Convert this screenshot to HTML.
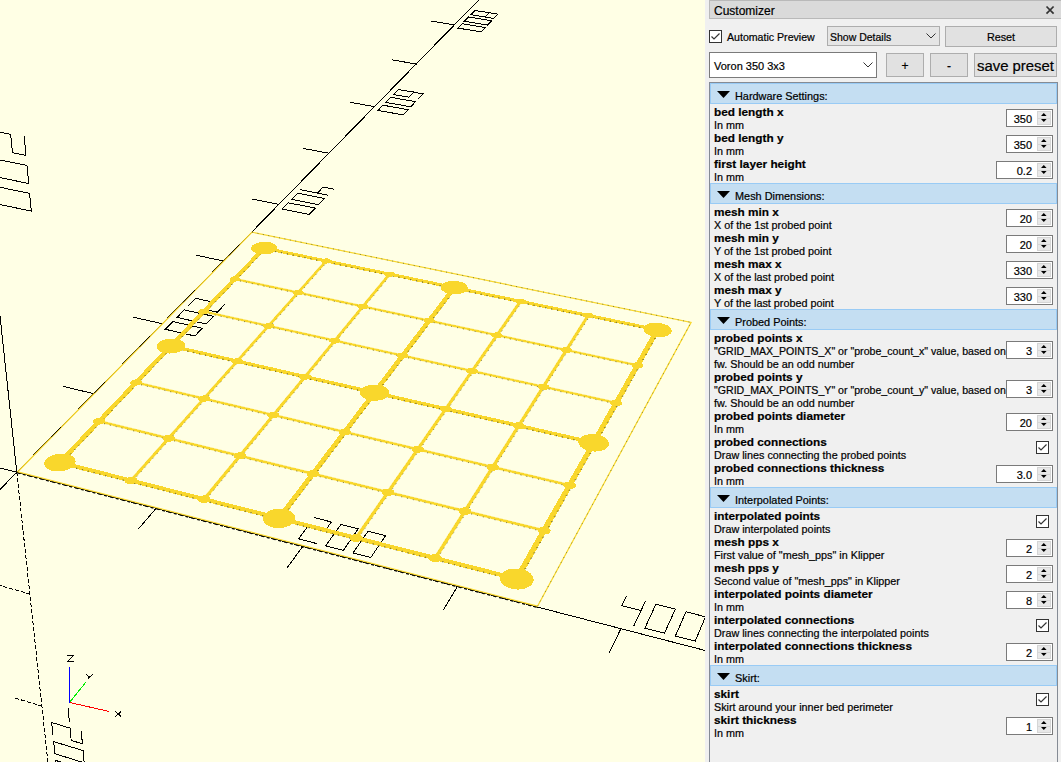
<!DOCTYPE html>
<html><head><meta charset="utf-8"><style>
html,body{margin:0;padding:0;width:1061px;height:762px;overflow:hidden;background:#f0f0f0}
.t{position:absolute;font-family:"Liberation Sans",sans-serif;color:#000;white-space:pre;-webkit-text-stroke:0.2px #000}
</style></head><body>
<div style="position:absolute;left:0;top:0;width:1061px;height:762px;overflow:hidden">
<svg width="705" height="762" viewBox="0 0 705 762" style="position:absolute;left:0;top:0;display:block">
<rect width="705" height="762" fill="#ffffe5"/>
<g stroke="#000" stroke-width="1" fill="none" stroke-linecap="square" shape-rendering="crispEdges"><line x1="16.8" y1="472.3" x2="1596.5" y2="881.2"/><line x1="16.8" y1="472.3" x2="489.6" y2="-11.1"/><line x1="16.8" y1="472.3" x2="-33.9" y2="0.7"/><line x1="16.8" y1="472.3" x2="-63.5" y2="451.5"/><line x1="16.8" y1="472.3" x2="-34.1" y2="524.2"/><line x1="16.8" y1="472.3" x2="53.0" y2="809.6" stroke-dasharray="3 3"/><line x1="156.1" y1="508.3" x2="138.6" y2="528.8"/><line x1="93.6" y1="393.7" x2="63.9" y2="386.5"/><line x1="302.8" y1="546.3" x2="287.1" y2="567.9"/><line x1="162.1" y1="323.7" x2="133.7" y2="317.3"/><line x1="457.5" y1="586.3" x2="443.8" y2="609.2"/><line x1="223.4" y1="261.0" x2="196.2" y2="255.2"/><line x1="620.9" y1="628.6" x2="609.3" y2="652.8"/><line x1="278.7" y1="204.4" x2="252.6" y2="199.2"/><line x1="793.6" y1="673.3" x2="784.5" y2="698.9"/><line x1="328.8" y1="153.2" x2="303.7" y2="148.5"/><line x1="976.5" y1="720.7" x2="970.3" y2="747.9"/><line x1="374.4" y1="106.6" x2="350.2" y2="102.3"/><line x1="1170.6" y1="770.9" x2="1167.5" y2="799.8"/><line x1="416.1" y1="64.0" x2="392.8" y2="60.0"/><line x1="1376.8" y1="824.3" x2="1377.4" y2="855.1"/><line x1="454.4" y1="24.9" x2="431.8" y2="21.2"/><line x1="29.8" y1="594.0" x2="-0.0" y2="585.6" stroke-dasharray="3 3"/><line x1="41.9" y1="706.1" x2="13.2" y2="697.5" stroke-dasharray="3 3"/><polyline points="314.2,517.6 331.4,522.0 325.6,530.0 308.4,525.6 298.6,538.9 316.1,543.4"/><polyline points="341.0,524.4 358.3,528.8 343.3,550.4 325.7,545.8 341.0,524.4"/><polyline points="368.0,531.3 385.5,535.7 370.8,557.5 353.0,552.9 368.0,531.3"/><polyline points="224.4,304.7 217.4,312.2 206.3,309.7 213.4,302.3 195.5,298.3 188.3,305.7"/><polyline points="213.4,316.3 206.2,324.0 177.0,317.4 184.3,309.9 213.4,316.3"/><polyline points="202.2,328.2 194.9,336.0 165.4,329.3 172.9,321.6 202.2,328.2"/><polyline points="626.2,596.7 621.8,605.6 641.1,610.5"/><polyline points="645.3,601.5 634.1,625.3"/><polyline points="655.9,604.2 675.3,609.1 664.5,633.2 644.9,628.1 655.9,604.2"/><polyline points="686.0,611.8 705.5,616.8 695.2,641.1 675.4,636.0 686.0,611.8"/><polyline points="333.3,189.0 323.2,187.0 317.4,193.1"/><polyline points="327.6,195.1 300.8,189.8"/><polyline points="324.4,198.5 318.5,204.7 291.6,199.3 297.6,193.2 324.4,198.5"/><polyline points="315.3,208.1 309.3,214.4 282.2,209.0 288.3,202.8 315.3,208.1"/><polyline points="995.6,690.2 974.2,684.8 967.9,711.4 989.7,717.0 993.4,700.3 971.8,694.8"/><polyline points="1007.5,693.3 1029.1,698.7 1023.8,725.8 1001.8,720.1 1007.5,693.3"/><polyline points="1041.1,701.8 1063.0,707.3 1058.2,734.6 1036.0,728.9 1041.1,701.8"/><polyline points="418.2,98.9 422.9,93.8 398.3,89.5 393.4,94.5 408.7,97.2 413.5,92.2"/><polyline points="415.5,101.7 410.7,106.8 385.8,102.4 390.7,97.3 415.5,101.7"/><polyline points="408.0,109.7 403.1,114.9 378.0,110.4 383.0,105.2 408.0,109.7"/><polyline points="1364.9,783.8 1389.1,789.9 1389.9,820.1 1365.3,813.8 1364.9,783.8"/><polyline points="1365.1,795.1 1389.4,801.3"/><polyline points="1402.4,793.3 1426.9,799.5 1428.3,830.0 1403.5,823.6 1402.4,793.3"/><polyline points="1440.4,802.9 1465.1,809.2 1467.3,840.1 1442.1,833.6 1440.4,802.9"/><polyline points="497.9,14.1 493.9,18.4 470.9,14.7 475.0,10.5 497.9,14.1"/><polyline points="489.2,12.7 485.1,17.0"/><polyline points="491.7,20.8 487.6,25.1 464.4,21.3 468.6,17.0 491.7,20.8"/><polyline points="485.3,27.5 481.2,31.9 457.9,28.1 462.1,23.7 485.3,27.5"/><polyline points="24.3,137.0 26.0,155.4 12.5,152.7 10.7,134.3 -11.5,130.0 -9.5,148.3"/><polyline points="27.0,165.4 28.7,183.5 -6.6,176.3 -8.5,158.3 27.0,165.4"/><polyline points="29.6,193.4 31.3,211.1 -3.7,203.8 -5.6,186.1 29.6,193.4"/><polyline points="68.1,708.7 69.3,721.2"/><polyline points="81.3,731.5 82.4,743.8 71.2,740.4 70.0,728.1 51.7,722.5 52.9,734.8"/><polyline points="83.1,750.6 84.2,762.8 54.9,753.7 53.7,741.6 83.1,750.6"/><polyline points="84.8,769.4 86.0,781.4 56.9,772.3 55.6,760.4 84.8,769.4"/></g>
<polygon points="17.8,471.8 537.5,606.2 691.1,322.4 252.1,232.2" fill="none" stroke="#f9d72c" stroke-width="1.2"/><polyline points="252.1,232.2 691.1,322.4 537.5,606.2" fill="none" stroke="#4a5a30" stroke-opacity="0.7" stroke-width="1" stroke-dasharray="1 4.5"/>
<g fill="#f9d72c" stroke="#f9d72c" stroke-width="1" stroke-linejoin="round" shape-rendering="crispEdges"><polygon stroke-width="0.6" points="59.1,463.2 516.2,579.9 517.2,577.9 60.7,461.6"/><polygon stroke-width="0.6" points="58.6,462.1 61.3,462.8 265.4,248.3 263.1,247.8"/><polygon stroke-width="0.6" points="98.4,422.0 543.5,531.4 544.6,529.6 99.9,420.5"/><polygon stroke-width="0.6" points="129.7,480.2 132.5,480.9 327.4,261.2 325.0,260.7"/><polygon stroke-width="0.6" points="135.4,383.2 569.2,486.1 570.1,484.4 136.8,381.8"/><polygon stroke-width="0.6" points="202.7,498.8 205.6,499.6 390.8,274.4 388.3,273.9"/><polygon stroke-width="0.6" points="170.2,346.7 593.2,443.6 594.1,442.0 171.6,345.3"/><polygon stroke-width="0.6" points="277.7,517.9 280.6,518.7 455.5,287.9 453.0,287.3"/><polygon stroke-width="0.6" points="203.1,312.2 615.8,403.6 616.6,402.1 204.4,310.9"/><polygon stroke-width="0.6" points="354.7,537.6 357.7,538.3 521.8,301.6 519.2,301.1"/><polygon stroke-width="0.6" points="234.2,279.6 637.1,366.0 637.9,364.6 235.4,278.3"/><polygon stroke-width="0.6" points="433.8,557.8 436.9,558.5 589.5,315.7 586.9,315.2"/><polygon stroke-width="0.6" points="263.7,248.7 657.1,330.5 657.9,329.2 264.8,247.5"/><polygon stroke-width="0.6" points="515.1,578.5 518.3,579.3 658.9,330.1 656.2,329.6"/><polygon points="58.7,463.7 515.9,580.4 517.5,577.4 61.1,461.2"/><polygon points="57.9,461.9 62.0,462.9 266.0,248.5 262.5,247.7"/><polygon points="169.9,347.0 593.0,444.0 594.3,441.6 171.9,345.0"/><polygon points="276.9,517.8 281.3,518.9 456.2,288.0 452.4,287.2"/><polygon points="263.4,249.0 657.0,330.9 658.1,328.9 265.1,247.2"/><polygon points="514.3,578.3 519.1,579.5 659.6,330.3 655.5,329.4"/></g>
<g fill="none" stroke="#5b5a2a" stroke-opacity="0.75" stroke-width="1" stroke-dasharray="1 5"><polyline points="58.9,463.5 516.0,580.2"/><polyline points="61.7,462.9 265.8,248.4"/><polyline points="98.2,422.2 543.4,531.7"/><polyline points="132.9,481.0 327.8,261.3"/><polyline points="135.2,383.4 569.0,486.4"/><polyline points="206.0,499.7 391.1,274.5"/><polyline points="170.0,346.9 593.1,443.8"/><polyline points="281.0,518.8 455.9,287.9"/><polyline points="203.0,312.4 615.7,403.9"/><polyline points="358.1,538.5 522.2,301.7"/><polyline points="234.1,279.7 637.0,366.2"/><polyline points="437.3,558.7 589.9,315.8"/><polyline points="263.5,248.8 657.0,330.7"/><polyline points="518.8,579.4 659.3,330.2"/><polyline points="58.5,463.9 515.7,580.6"/><polyline points="62.4,463.0 266.4,248.5"/><polyline points="169.7,347.2 592.8,444.2"/><polyline points="281.8,519.0 456.6,288.1"/><polyline points="263.2,249.1 656.8,331.1"/><polyline points="519.6,579.6 660.0,330.4"/></g>
<g fill="#f9d72c" stroke="none" shape-rendering="crispEdges"><polygon points="65.4,463.8 65.9,463.1 66.1,462.4 66.2,461.7 66.0,461.1 65.5,460.5 64.9,459.9 64.0,459.5 63.0,459.1 61.9,458.9 60.7,458.9 59.5,458.9 58.3,459.1 57.1,459.4 56.1,459.9 55.2,460.4 54.5,461.0 54.0,461.7 53.7,462.4 53.6,463.1 53.8,463.8 54.3,464.4 54.9,464.9 55.8,465.4 56.8,465.7 57.9,465.9 59.1,466.0 60.3,465.9 61.5,465.7 62.7,465.4 63.7,465.0 64.6,464.4"/><polygon points="104.5,422.5 105.0,421.9 105.2,421.3 105.2,420.6 105.0,420.0 104.6,419.4 103.9,418.9 103.1,418.5 102.1,418.2 101.0,418.0 99.9,417.9 98.7,418.0 97.5,418.1 96.4,418.4 95.4,418.9 94.5,419.4 93.9,419.9 93.4,420.6 93.1,421.2 93.1,421.9 93.3,422.5 93.8,423.1 94.4,423.6 95.2,424.0 96.2,424.3 97.3,424.5 98.5,424.6 99.7,424.5 100.8,424.4 102.0,424.0 103.0,423.6 103.8,423.1"/><polygon points="141.3,383.7 141.7,383.1 142.0,382.5 141.9,381.9 141.7,381.3 141.3,380.8 140.6,380.3 139.8,379.9 138.9,379.6 137.8,379.4 136.7,379.4 135.5,379.4 134.4,379.6 133.3,379.9 132.4,380.3 131.6,380.7 130.9,381.3 130.5,381.9 130.2,382.5 130.2,383.1 130.5,383.7 130.9,384.2 131.5,384.7 132.4,385.1 133.3,385.4 134.4,385.6 135.5,385.7 136.7,385.6 137.8,385.4 138.9,385.1 139.8,384.8 140.7,384.3"/><polygon points="176.0,347.2 176.4,346.6 176.6,346.0 176.6,345.4 176.3,344.9 175.9,344.4 175.3,343.9 174.4,343.5 173.5,343.3 172.5,343.1 171.4,343.0 170.3,343.1 169.2,343.2 168.1,343.5 167.2,343.9 166.4,344.3 165.8,344.8 165.4,345.4 165.2,346.0 165.2,346.6 165.5,347.1 165.9,347.6 166.5,348.1 167.3,348.5 168.3,348.7 169.3,348.9 170.4,349.0 171.5,348.9 172.6,348.8 173.7,348.5 174.6,348.1 175.4,347.7"/><polygon points="208.7,312.6 209.1,312.1 209.3,311.6 209.2,311.0 209.0,310.5 208.6,310.0 207.9,309.6 207.1,309.2 206.2,308.9 205.2,308.8 204.1,308.7 203.1,308.8 202.0,308.9 201.0,309.2 200.1,309.5 199.4,310.0 198.8,310.4 198.4,311.0 198.2,311.5 198.3,312.1 198.5,312.6 198.9,313.1 199.6,313.5 200.4,313.9 201.3,314.1 202.3,314.3 203.4,314.4 204.5,314.3 205.5,314.1 206.5,313.9 207.4,313.5 208.1,313.1"/><polygon points="239.7,280.0 240.0,279.5 240.2,279.0 240.1,278.4 239.9,277.9 239.5,277.5 238.8,277.1 238.1,276.7 237.2,276.5 236.2,276.3 235.1,276.3 234.1,276.3 233.0,276.5 232.1,276.7 231.2,277.1 230.5,277.5 230.0,277.9 229.6,278.4 229.4,278.9 229.5,279.4 229.7,279.9 230.2,280.4 230.8,280.8 231.6,281.2 232.5,281.4 233.5,281.6 234.5,281.6 235.6,281.6 236.6,281.4 237.6,281.2 238.4,280.9 239.1,280.4"/><polygon points="269.0,249.1 269.3,248.6 269.5,248.1 269.4,247.6 269.2,247.1 268.7,246.7 268.1,246.3 267.3,246.0 266.4,245.8 265.5,245.6 264.5,245.6 263.4,245.6 262.5,245.8 261.5,246.0 260.7,246.3 260.0,246.7 259.5,247.1 259.2,247.6 259.0,248.1 259.1,248.6 259.3,249.0 259.8,249.5 260.4,249.9 261.1,250.2 262.0,250.4 263.0,250.6 264.0,250.6 265.0,250.6 266.0,250.4 267.0,250.2 267.8,249.9 268.5,249.5"/><polygon points="136.7,482.0 137.1,481.3 137.4,480.6 137.4,479.9 137.1,479.2 136.7,478.6 136.0,478.0 135.1,477.5 134.1,477.2 132.9,477.0 131.7,476.9 130.5,477.0 129.3,477.2 128.1,477.5 127.1,478.0 126.2,478.5 125.5,479.1 125.0,479.8 124.8,480.5 124.8,481.3 125.0,481.9 125.5,482.6 126.2,483.1 127.0,483.6 128.1,484.0 129.2,484.2 130.4,484.2 131.7,484.2 132.9,484.0 134.1,483.6 135.1,483.2 136.0,482.6"/><polygon points="174.1,439.6 174.5,439.0 174.7,438.3 174.7,437.7 174.5,437.0 174.0,436.4 173.3,435.9 172.4,435.5 171.4,435.1 170.3,434.9 169.1,434.9 167.9,434.9 166.8,435.1 165.7,435.4 164.7,435.9 163.8,436.4 163.2,437.0 162.7,437.6 162.5,438.3 162.5,439.0 162.8,439.6 163.3,440.2 163.9,440.7 164.8,441.2 165.8,441.5 166.9,441.7 168.1,441.8 169.3,441.7 170.5,441.5 171.6,441.2 172.6,440.8 173.4,440.2"/><polygon points="209.2,399.8 209.7,399.2 209.8,398.6 209.8,398.0 209.6,397.4 209.1,396.8 208.4,396.3 207.6,395.9 206.6,395.6 205.5,395.4 204.3,395.3 203.2,395.4 202.0,395.6 201.0,395.9 200.0,396.3 199.2,396.8 198.6,397.3 198.2,397.9 198.0,398.6 198.0,399.2 198.3,399.8 198.8,400.4 199.4,400.9 200.3,401.3 201.3,401.6 202.4,401.8 203.5,401.8 204.7,401.8 205.8,401.6 206.9,401.3 207.8,400.9 208.6,400.4"/><polygon points="242.4,362.4 242.7,361.8 242.9,361.2 242.9,360.6 242.6,360.0 242.1,359.5 241.5,359.0 240.6,358.6 239.7,358.4 238.6,358.2 237.5,358.1 236.4,358.2 235.3,358.3 234.2,358.6 233.3,359.0 232.6,359.5 232.0,360.0 231.6,360.6 231.4,361.1 231.5,361.7 231.7,362.3 232.2,362.8 232.9,363.3 233.7,363.7 234.7,364.0 235.7,364.2 236.8,364.2 238.0,364.2 239.1,364.0 240.1,363.7 241.0,363.3 241.8,362.9"/><polygon points="273.6,327.0 274.0,326.5 274.1,325.9 274.0,325.3 273.8,324.8 273.3,324.3 272.6,323.9 271.8,323.5 270.9,323.2 269.8,323.1 268.8,323.0 267.7,323.1 266.6,323.2 265.6,323.5 264.7,323.8 264.0,324.3 263.5,324.8 263.1,325.3 262.9,325.9 263.0,326.4 263.3,327.0 263.7,327.5 264.4,327.9 265.2,328.3 266.2,328.5 267.2,328.7 268.3,328.8 269.4,328.7 270.4,328.6 271.4,328.3 272.3,327.9 273.0,327.5"/><polygon points="303.1,293.6 303.5,293.1 303.6,292.6 303.5,292.0 303.2,291.5 302.8,291.0 302.1,290.6 301.3,290.3 300.4,290.0 299.4,289.9 298.3,289.8 297.3,289.9 296.2,290.0 295.3,290.3 294.4,290.6 293.7,291.0 293.2,291.5 292.9,292.0 292.7,292.5 292.8,293.0 293.1,293.6 293.5,294.0 294.2,294.4 295.0,294.8 295.9,295.0 296.9,295.2 298.0,295.3 299.1,295.2 300.1,295.1 301.0,294.8 301.9,294.5 302.6,294.1"/><polygon points="331.0,262.0 331.4,261.5 331.5,261.0 331.4,260.5 331.1,260.0 330.6,259.6 330.0,259.2 329.2,258.8 328.3,258.6 327.3,258.4 326.3,258.4 325.3,258.4 324.3,258.6 323.3,258.8 322.5,259.1 321.9,259.5 321.3,260.0 321.0,260.4 320.9,260.9 321.0,261.5 321.3,261.9 321.7,262.4 322.4,262.8 323.2,263.1 324.1,263.4 325.1,263.5 326.1,263.6 327.1,263.5 328.1,263.4 329.1,263.1 329.9,262.8 330.5,262.4"/><polygon points="209.9,500.7 210.3,500.0 210.5,499.2 210.5,498.5 210.2,497.8 209.7,497.1 208.9,496.6 208.0,496.1 207.0,495.7 205.8,495.5 204.6,495.4 203.3,495.5 202.1,495.7 201.0,496.1 199.9,496.5 199.1,497.1 198.4,497.7 197.9,498.4 197.7,499.2 197.8,499.9 198.0,500.6 198.6,501.3 199.3,501.8 200.2,502.3 201.3,502.7 202.4,502.9 203.7,503.0 204.9,502.9 206.2,502.7 207.3,502.3 208.3,501.9 209.2,501.3"/><polygon points="245.5,457.2 245.9,456.5 246.1,455.8 246.0,455.1 245.7,454.5 245.2,453.9 244.5,453.3 243.6,452.9 242.5,452.6 241.4,452.4 240.2,452.3 239.0,452.3 237.8,452.5 236.7,452.9 235.7,453.3 234.9,453.8 234.3,454.4 233.9,455.1 233.7,455.8 233.7,456.5 234.0,457.1 234.5,457.8 235.2,458.3 236.1,458.7 237.2,459.1 238.3,459.3 239.5,459.3 240.7,459.3 241.9,459.1 243.0,458.8 244.0,458.3 244.8,457.8"/><polygon points="278.9,416.3 279.3,415.7 279.4,415.1 279.4,414.4 279.1,413.8 278.5,413.2 277.8,412.7 277.0,412.3 275.9,412.0 274.8,411.8 273.7,411.7 272.5,411.8 271.4,412.0 270.3,412.3 269.4,412.7 268.6,413.2 268.0,413.8 267.6,414.4 267.4,415.0 267.5,415.7 267.8,416.3 268.3,416.9 269.0,417.4 269.9,417.8 270.9,418.1 272.0,418.3 273.2,418.4 274.4,418.3 275.5,418.1 276.6,417.8 277.5,417.4 278.3,416.9"/><polygon points="310.3,377.9 310.7,377.3 310.8,376.7 310.8,376.1 310.5,375.5 309.9,375.0 309.2,374.5 308.4,374.1 307.4,373.8 306.3,373.7 305.2,373.6 304.0,373.6 302.9,373.8 301.9,374.1 301.0,374.5 300.3,375.0 299.7,375.5 299.4,376.1 299.2,376.7 299.3,377.3 299.6,377.9 300.1,378.4 300.8,378.9 301.7,379.3 302.6,379.6 303.7,379.8 304.9,379.8 306.0,379.8 307.1,379.6 308.1,379.3 309.0,378.9 309.8,378.5"/><polygon points="340.0,341.7 340.3,341.2 340.5,340.6 340.4,340.0 340.1,339.5 339.5,338.9 338.9,338.5 338.0,338.1 337.0,337.8 336.0,337.7 334.9,337.6 333.8,337.7 332.7,337.8 331.7,338.1 330.9,338.5 330.2,338.9 329.6,339.4 329.3,340.0 329.2,340.5 329.2,341.1 329.5,341.7 330.1,342.2 330.7,342.6 331.6,343.0 332.6,343.3 333.6,343.5 334.7,343.5 335.8,343.5 336.9,343.3 337.9,343.0 338.8,342.7 339.5,342.2"/><polygon points="368.0,307.5 368.3,307.0 368.4,306.4 368.3,305.9 368.0,305.4 367.5,304.9 366.8,304.5 366.0,304.1 365.0,303.9 364.0,303.7 362.9,303.6 361.9,303.7 360.8,303.8 359.9,304.1 359.1,304.4 358.4,304.9 357.9,305.3 357.5,305.9 357.4,306.4 357.5,306.9 357.8,307.5 358.3,308.0 359.0,308.4 359.9,308.7 360.8,309.0 361.8,309.2 362.9,309.2 364.0,309.2 365.0,309.0 366.0,308.8 366.8,308.4 367.5,308.0"/><polygon points="394.5,275.2 394.8,274.7 394.9,274.2 394.8,273.6 394.4,273.1 393.9,272.7 393.3,272.3 392.5,272.0 391.5,271.7 390.5,271.6 389.5,271.5 388.4,271.5 387.4,271.7 386.5,271.9 385.7,272.3 385.1,272.7 384.6,273.1 384.3,273.6 384.2,274.1 384.3,274.6 384.6,275.1 385.1,275.6 385.8,276.0 386.6,276.3 387.5,276.6 388.5,276.7 389.6,276.8 390.6,276.7 391.6,276.6 392.5,276.3 393.3,276.0 394.0,275.6"/><polygon points="285.0,519.8 285.4,519.1 285.6,518.3 285.5,517.6 285.2,516.9 284.6,516.2 283.9,515.6 282.9,515.1 281.8,514.8 280.6,514.5 279.4,514.5 278.1,514.5 276.9,514.7 275.7,515.1 274.7,515.6 273.9,516.2 273.2,516.8 272.8,517.5 272.7,518.3 272.7,519.1 273.0,519.8 273.6,520.5 274.4,521.0 275.3,521.5 276.4,521.9 277.6,522.1 278.9,522.2 280.1,522.1 281.4,521.9 282.5,521.6 283.5,521.1 284.4,520.5"/><polygon points="318.7,475.2 319.1,474.5 319.2,473.8 319.1,473.1 318.8,472.4 318.2,471.8 317.5,471.2 316.5,470.8 315.5,470.4 314.3,470.2 313.1,470.1 311.9,470.2 310.7,470.4 309.6,470.7 308.6,471.2 307.8,471.7 307.2,472.4 306.8,473.0 306.7,473.7 306.8,474.4 307.1,475.1 307.6,475.8 308.4,476.3 309.3,476.8 310.4,477.1 311.6,477.3 312.8,477.4 314.0,477.3 315.2,477.1 316.3,476.8 317.3,476.3 318.1,475.8"/><polygon points="350.3,433.3 350.6,432.6 350.8,432.0 350.7,431.3 350.3,430.7 349.8,430.1 349.0,429.6 348.1,429.1 347.1,428.8 345.9,428.6 344.8,428.5 343.6,428.6 342.4,428.8 341.4,429.1 340.5,429.5 339.7,430.0 339.1,430.6 338.8,431.3 338.6,431.9 338.7,432.6 339.1,433.2 339.6,433.8 340.3,434.3 341.3,434.8 342.3,435.1 343.4,435.3 344.6,435.4 345.8,435.3 347.0,435.1 348.0,434.8 349.0,434.4 349.7,433.9"/><polygon points="380.0,393.9 380.3,393.3 380.4,392.6 380.3,392.0 380.0,391.4 379.4,390.9 378.7,390.4 377.8,390.0 376.8,389.7 375.7,389.5 374.5,389.4 373.4,389.5 372.3,389.7 371.3,390.0 370.4,390.3 369.6,390.8 369.1,391.4 368.8,392.0 368.7,392.6 368.8,393.2 369.1,393.8 369.6,394.4 370.4,394.9 371.3,395.3 372.3,395.6 373.4,395.8 374.6,395.8 375.7,395.8 376.8,395.6 377.8,395.3 378.7,394.9 379.5,394.4"/><polygon points="408.0,356.8 408.3,356.2 408.4,355.6 408.3,355.0 407.9,354.5 407.4,353.9 406.6,353.5 405.8,353.1 404.8,352.8 403.7,352.6 402.6,352.6 401.5,352.6 400.4,352.8 399.4,353.1 398.6,353.4 397.9,353.9 397.3,354.4 397.0,355.0 396.9,355.6 397.1,356.2 397.4,356.7 397.9,357.3 398.7,357.7 399.5,358.1 400.5,358.4 401.6,358.6 402.7,358.6 403.9,358.6 404.9,358.4 405.9,358.1 406.8,357.7 407.5,357.3"/><polygon points="434.4,321.7 434.7,321.2 434.8,320.7 434.6,320.1 434.3,319.6 433.7,319.1 433.0,318.6 432.2,318.3 431.2,318.0 430.1,317.8 429.1,317.8 428.0,317.8 426.9,318.0 426.0,318.3 425.2,318.6 424.5,319.0 424.0,319.5 423.7,320.1 423.6,320.6 423.8,321.2 424.1,321.7 424.6,322.2 425.4,322.6 426.2,323.0 427.2,323.3 428.2,323.4 429.3,323.5 430.4,323.4 431.5,323.3 432.4,323.0 433.2,322.7 433.9,322.2"/><polygon points="459.3,288.7 459.6,288.1 459.7,287.6 459.5,287.1 459.2,286.6 458.7,286.1 458.0,285.7 457.1,285.4 456.2,285.1 455.1,285.0 454.1,284.9 453.0,285.0 452.0,285.1 451.1,285.3 450.3,285.7 449.7,286.1 449.2,286.5 448.9,287.1 448.9,287.6 449.0,288.1 449.4,288.6 449.9,289.1 450.6,289.5 451.4,289.8 452.4,290.1 453.4,290.2 454.5,290.3 455.5,290.3 456.5,290.1 457.4,289.9 458.2,289.5 458.9,289.1"/><polygon points="362.2,539.5 362.6,538.8 362.7,538.0 362.6,537.2 362.2,536.5 361.6,535.8 360.8,535.2 359.8,534.7 358.7,534.3 357.5,534.1 356.2,534.0 354.9,534.1 353.7,534.3 352.6,534.7 351.6,535.1 350.7,535.7 350.1,536.4 349.7,537.2 349.6,537.9 349.7,538.7 350.1,539.5 350.7,540.2 351.5,540.8 352.5,541.3 353.6,541.6 354.8,541.9 356.1,541.9 357.4,541.9 358.6,541.7 359.8,541.3 360.8,540.8 361.6,540.2"/><polygon points="393.8,493.6 394.2,492.9 394.3,492.2 394.2,491.5 393.8,490.8 393.2,490.1 392.4,489.6 391.4,489.1 390.3,488.8 389.1,488.6 387.9,488.5 386.7,488.5 385.5,488.7 384.4,489.1 383.4,489.5 382.7,490.1 382.1,490.7 381.7,491.4 381.6,492.2 381.7,492.9 382.1,493.6 382.7,494.2 383.5,494.8 384.5,495.3 385.6,495.6 386.8,495.8 388.0,495.9 389.2,495.9 390.4,495.6 391.5,495.3 392.5,494.8 393.3,494.3"/><polygon points="423.5,450.6 423.8,450.0 423.9,449.3 423.8,448.6 423.4,448.0 422.8,447.3 422.0,446.8 421.1,446.4 420.0,446.1 418.8,445.9 417.6,445.8 416.4,445.8 415.3,446.0 414.3,446.4 413.3,446.8 412.6,447.3 412.0,447.9 411.7,448.6 411.6,449.2 411.8,449.9 412.1,450.6 412.7,451.2 413.5,451.7 414.4,452.2 415.5,452.5 416.7,452.7 417.9,452.8 419.1,452.7 420.2,452.5 421.3,452.2 422.2,451.8 423.0,451.2"/><polygon points="451.4,410.2 451.7,409.6 451.7,409.0 451.6,408.3 451.2,407.7 450.6,407.1 449.8,406.6 448.9,406.2 447.9,405.9 446.7,405.7 445.6,405.7 444.4,405.7 443.3,405.9 442.3,406.2 441.4,406.6 440.7,407.1 440.2,407.7 439.9,408.3 439.8,408.9 440.0,409.6 440.3,410.2 440.9,410.7 441.7,411.3 442.6,411.7 443.7,412.0 444.8,412.2 446.0,412.2 447.1,412.2 448.2,412.0 449.3,411.7 450.1,411.3 450.8,410.8"/><polygon points="477.6,372.2 477.9,371.6 477.9,371.0 477.8,370.4 477.4,369.8 476.8,369.3 476.0,368.8 475.1,368.4 474.1,368.1 473.0,368.0 471.9,367.9 470.8,367.9 469.7,368.1 468.7,368.4 467.9,368.8 467.2,369.2 466.7,369.8 466.4,370.4 466.4,371.0 466.5,371.6 466.9,372.1 467.5,372.7 468.2,373.2 469.1,373.5 470.2,373.8 471.3,374.0 472.4,374.1 473.5,374.0 474.6,373.9 475.6,373.6 476.4,373.2 477.1,372.7"/><polygon points="502.3,336.3 502.6,335.8 502.6,335.2 502.5,334.6 502.1,334.1 501.5,333.6 500.8,333.1 499.9,332.8 498.9,332.5 497.8,332.3 496.7,332.3 495.6,332.3 494.6,332.5 493.6,332.7 492.8,333.1 492.2,333.5 491.7,334.0 491.4,334.6 491.4,335.2 491.5,335.7 491.9,336.3 492.5,336.8 493.2,337.2 494.1,337.6 495.1,337.9 496.2,338.0 497.3,338.1 498.4,338.1 499.4,337.9 500.4,337.6 501.2,337.3 501.9,336.8"/><polygon points="525.7,302.4 525.9,301.9 526.0,301.4 525.8,300.8 525.4,300.3 524.8,299.8 524.1,299.4 523.2,299.1 522.3,298.8 521.2,298.7 520.1,298.6 519.1,298.7 518.1,298.8 517.2,299.1 516.4,299.4 515.8,299.8 515.3,300.3 515.1,300.8 515.0,301.3 515.2,301.9 515.6,302.4 516.1,302.9 516.9,303.3 517.7,303.7 518.7,303.9 519.8,304.1 520.8,304.1 521.9,304.1 522.9,303.9 523.8,303.7 524.6,303.3 525.2,302.9"/><polygon points="441.5,559.7 441.9,559.0 442.0,558.2 441.8,557.4 441.4,556.6 440.7,555.9 439.9,555.3 438.9,554.8 437.7,554.4 436.4,554.2 435.1,554.1 433.9,554.2 432.6,554.4 431.5,554.7 430.5,555.3 429.7,555.9 429.1,556.6 428.8,557.3 428.7,558.1 428.8,558.9 429.2,559.7 429.9,560.4 430.7,561.0 431.8,561.5 432.9,561.9 434.2,562.2 435.5,562.2 436.8,562.2 438.1,561.9 439.2,561.6 440.2,561.1 441.0,560.4"/><polygon points="471.0,512.6 471.3,511.9 471.4,511.1 471.2,510.4 470.8,509.7 470.2,509.0 469.3,508.4 468.3,507.9 467.2,507.6 466.0,507.4 464.7,507.3 463.5,507.4 462.3,507.6 461.2,507.9 460.2,508.4 459.5,509.0 458.9,509.6 458.6,510.3 458.5,511.1 458.7,511.8 459.1,512.6 459.8,513.2 460.6,513.8 461.6,514.3 462.7,514.6 464.0,514.9 465.2,514.9 466.5,514.9 467.7,514.7 468.8,514.3 469.7,513.8 470.5,513.3"/><polygon points="498.6,468.4 498.9,467.8 499.0,467.1 498.8,466.4 498.3,465.7 497.7,465.1 496.9,464.5 495.9,464.1 494.8,463.7 493.6,463.5 492.4,463.5 491.2,463.5 490.0,463.7 489.0,464.0 488.1,464.5 487.4,465.0 486.9,465.6 486.6,466.3 486.5,467.0 486.7,467.7 487.1,468.4 487.7,469.0 488.5,469.6 489.5,470.0 490.6,470.3 491.8,470.6 493.1,470.6 494.3,470.6 495.4,470.4 496.5,470.0 497.4,469.6 498.1,469.0"/><polygon points="524.5,427.0 524.8,426.3 524.8,425.7 524.6,425.0 524.2,424.4 523.6,423.8 522.8,423.3 521.8,422.9 520.7,422.6 519.6,422.4 518.4,422.3 517.2,422.4 516.1,422.5 515.1,422.8 514.3,423.3 513.6,423.8 513.1,424.3 512.8,425.0 512.8,425.6 512.9,426.3 513.4,426.9 514.0,427.5 514.8,428.0 515.8,428.5 516.8,428.8 518.0,429.0 519.2,429.0 520.3,429.0 521.5,428.8 522.5,428.5 523.3,428.1 524.0,427.6"/><polygon points="548.9,388.0 549.1,387.4 549.2,386.8 549.0,386.1 548.6,385.5 547.9,385.0 547.1,384.5 546.2,384.1 545.1,383.8 544.0,383.6 542.9,383.6 541.7,383.6 540.7,383.8 539.7,384.1 538.9,384.5 538.2,385.0 537.7,385.5 537.5,386.1 537.5,386.7 537.6,387.3 538.1,387.9 538.7,388.5 539.5,389.0 540.4,389.4 541.5,389.7 542.6,389.9 543.7,389.9 544.9,389.9 546.0,389.7 546.9,389.4 547.8,389.0 548.4,388.5"/><polygon points="571.9,351.2 572.1,350.7 572.1,350.1 571.9,349.5 571.5,348.9 570.9,348.4 570.1,348.0 569.2,347.6 568.1,347.3 567.1,347.1 565.9,347.1 564.8,347.1 563.8,347.3 562.9,347.6 562.1,347.9 561.4,348.4 561.0,348.9 560.7,349.5 560.7,350.0 560.9,350.6 561.3,351.2 561.9,351.7 562.7,352.2 563.6,352.5 564.7,352.8 565.8,353.0 566.9,353.1 568.0,353.0 569.0,352.8 570.0,352.6 570.8,352.2 571.4,351.7"/><polygon points="593.5,316.5 593.7,316.0 593.7,315.5 593.5,314.9 593.1,314.4 592.5,313.9 591.8,313.5 590.9,313.1 589.9,312.8 588.8,312.7 587.7,312.6 586.6,312.7 585.6,312.8 584.7,313.1 584.0,313.4 583.3,313.9 582.9,314.3 582.7,314.9 582.7,315.4 582.9,316.0 583.3,316.5 583.9,317.0 584.7,317.4 585.6,317.8 586.6,318.1 587.6,318.2 588.7,318.3 589.8,318.2 590.8,318.1 591.7,317.8 592.5,317.5 593.1,317.0"/><polygon points="523.1,580.5 523.4,579.7 523.4,578.9 523.2,578.1 522.8,577.3 522.1,576.6 521.2,576.0 520.1,575.4 518.9,575.0 517.6,574.8 516.3,574.7 515.0,574.8 513.7,575.0 512.6,575.4 511.6,575.9 510.9,576.6 510.3,577.3 510.0,578.1 510.0,578.9 510.2,579.7 510.6,580.5 511.3,581.2 512.2,581.9 513.3,582.4 514.5,582.8 515.8,583.0 517.1,583.1 518.4,583.0 519.7,582.8 520.8,582.4 521.8,581.9 522.5,581.3"/><polygon points="550.3,532.1 550.5,531.3 550.6,530.6 550.3,529.8 549.9,529.1 549.2,528.4 548.3,527.8 547.3,527.3 546.1,526.9 544.8,526.7 543.6,526.6 542.3,526.7 541.1,526.9 540.0,527.3 539.1,527.7 538.4,528.3 537.8,529.0 537.6,529.7 537.5,530.5 537.7,531.3 538.2,532.0 538.9,532.7 539.8,533.3 540.8,533.8 542.0,534.2 543.2,534.4 544.5,534.5 545.8,534.4 547.0,534.2 548.1,533.8 549.0,533.3 549.7,532.7"/><polygon points="575.7,486.7 575.9,486.0 576.0,485.3 575.7,484.6 575.3,483.9 574.6,483.2 573.7,482.7 572.7,482.2 571.6,481.9 570.3,481.7 569.1,481.6 567.9,481.7 566.7,481.9 565.7,482.2 564.8,482.7 564.1,483.2 563.6,483.8 563.4,484.5 563.3,485.2 563.6,486.0 564.0,486.7 564.7,487.3 565.6,487.9 566.6,488.3 567.7,488.7 568.9,488.9 570.2,489.0 571.4,488.9 572.6,488.7 573.6,488.3 574.5,487.9 575.2,487.3"/><polygon points="599.5,444.1 599.8,443.5 599.8,442.8 599.5,442.1 599.1,441.5 598.4,440.9 597.6,440.4 596.6,439.9 595.5,439.6 594.3,439.4 593.1,439.4 591.9,439.4 590.8,439.6 589.8,439.9 588.9,440.3 588.3,440.9 587.8,441.5 587.6,442.1 587.5,442.8 587.8,443.5 588.2,444.1 588.9,444.7 589.7,445.2 590.7,445.7 591.9,446.0 593.0,446.2 594.2,446.3 595.4,446.2 596.5,446.0 597.5,445.7 598.4,445.3 599.1,444.7"/><polygon points="621.9,404.2 622.2,403.5 622.2,402.9 621.9,402.3 621.5,401.7 620.8,401.1 620.0,400.6 619.0,400.2 617.9,399.9 616.8,399.7 615.6,399.6 614.5,399.7 613.4,399.9 612.4,400.2 611.6,400.6 611.0,401.1 610.5,401.6 610.3,402.2 610.3,402.9 610.5,403.5 611.0,404.1 611.6,404.7 612.5,405.2 613.4,405.6 614.5,405.9 615.7,406.1 616.8,406.2 618.0,406.1 619.1,405.9 620.0,405.6 620.9,405.2 621.5,404.7"/><polygon points="643.0,366.5 643.3,365.9 643.2,365.3 643.0,364.7 642.5,364.2 641.9,363.6 641.1,363.2 640.1,362.8 639.1,362.5 638.0,362.3 636.8,362.2 635.7,362.3 634.7,362.5 633.7,362.7 633.0,363.1 632.3,363.6 631.9,364.1 631.7,364.7 631.7,365.3 632.0,365.9 632.4,366.5 633.1,367.0 633.9,367.5 634.8,367.8 635.9,368.1 637.0,368.3 638.1,368.4 639.2,368.3 640.3,368.2 641.2,367.9 642.0,367.5 642.6,367.0"/><polygon points="663.0,331.0 663.1,330.4 663.1,329.9 662.9,329.3 662.4,328.8 661.8,328.3 661.0,327.8 660.1,327.5 659.0,327.2 657.9,327.0 656.8,327.0 655.8,327.0 654.8,327.2 653.9,327.4 653.1,327.8 652.5,328.2 652.1,328.7 651.9,329.3 651.9,329.8 652.2,330.4 652.6,330.9 653.2,331.4 654.0,331.9 655.0,332.3 656.0,332.5 657.1,332.7 658.2,332.8 659.3,332.7 660.3,332.5 661.2,332.3 662.0,331.9 662.6,331.5"/><polygon points="73.5,465.9 74.2,465.2 74.7,464.4 75.1,463.6 75.4,462.9 75.5,462.1 75.6,461.3 75.5,460.5 75.3,459.8 75.0,459.1 74.6,458.4 74.1,457.7 73.4,457.1 72.7,456.5 71.9,455.9 70.9,455.4 69.9,455.0 68.9,454.6 67.7,454.2 66.5,454.0 65.2,453.8 63.9,453.6 62.6,453.6 61.3,453.6 59.9,453.6 58.5,453.8 57.2,453.9 55.9,454.2 54.6,454.5 53.3,454.9 52.1,455.3 50.9,455.8 49.9,456.4 48.9,457.0 47.9,457.6 47.1,458.3 46.3,459.0 45.7,459.7 45.2,460.4 44.8,461.2 44.5,462.0 44.3,462.8 44.2,463.5 44.3,464.3 44.4,465.1 44.7,465.8 45.1,466.5 45.6,467.2 46.3,467.8 47.0,468.4 47.8,469.0 48.8,469.5 49.8,470.0 50.9,470.4 52.0,470.7 53.2,471.0 54.5,471.2 55.8,471.3 57.2,471.4 58.5,471.4 59.9,471.3 61.3,471.2 62.7,471.0 64.0,470.7 65.3,470.4 66.6,470.0 67.8,469.6 69.0,469.1 70.1,468.5 71.1,467.9 72.0,467.3 72.8,466.6"/><polygon points="183.6,348.9 184.1,348.3 184.5,347.7 184.8,347.0 185.1,346.4 185.1,345.7 185.1,345.1 185.0,344.4 184.8,343.8 184.5,343.2 184.0,342.6 183.5,342.1 182.9,341.5 182.1,341.0 181.3,340.6 180.5,340.1 179.5,339.8 178.5,339.4 177.4,339.2 176.3,338.9 175.1,338.8 173.9,338.7 172.7,338.6 171.5,338.6 170.2,338.6 169.0,338.8 167.8,338.9 166.6,339.1 165.4,339.4 164.3,339.7 163.2,340.1 162.2,340.5 161.3,340.9 160.4,341.4 159.6,342.0 158.9,342.5 158.3,343.1 157.7,343.7 157.3,344.3 157.0,345.0 156.8,345.6 156.6,346.3 156.6,346.9 156.7,347.6 157.0,348.2 157.3,348.8 157.7,349.4 158.2,350.0 158.9,350.5 159.6,351.0 160.4,351.5 161.3,351.9 162.2,352.3 163.2,352.6 164.3,352.9 165.5,353.1 166.6,353.3 167.8,353.4 169.1,353.5 170.3,353.5 171.6,353.4 172.8,353.3 174.1,353.2 175.3,352.9 176.4,352.7 177.6,352.3 178.6,352.0 179.7,351.6 180.6,351.1 181.5,350.6 182.3,350.1 183.0,349.5"/><polygon points="276.1,250.6 276.6,250.0 276.9,249.5 277.1,249.0 277.3,248.4 277.3,247.9 277.3,247.3 277.1,246.8 276.9,246.2 276.5,245.7 276.1,245.2 275.5,244.8 274.9,244.3 274.2,243.9 273.5,243.5 272.6,243.1 271.7,242.8 270.8,242.5 269.8,242.3 268.7,242.1 267.6,242.0 266.5,241.9 265.4,241.8 264.2,241.8 263.1,241.9 262.0,241.9 260.9,242.1 259.8,242.3 258.7,242.5 257.7,242.8 256.8,243.1 255.9,243.4 255.0,243.8 254.2,244.2 253.5,244.7 252.9,245.1 252.4,245.6 252.0,246.1 251.6,246.7 251.4,247.2 251.2,247.8 251.1,248.3 251.2,248.9 251.3,249.4 251.6,249.9 251.9,250.5 252.3,251.0 252.9,251.4 253.5,251.9 254.2,252.3 254.9,252.7 255.8,253.1 256.7,253.4 257.6,253.7 258.7,253.9 259.7,254.1 260.8,254.3 261.9,254.4 263.1,254.4 264.2,254.4 265.4,254.4 266.5,254.3 267.6,254.2 268.7,254.0 269.8,253.7 270.8,253.5 271.8,253.2 272.7,252.8 273.5,252.4 274.3,252.0 275.0,251.5 275.6,251.1"/><polygon points="293.9,522.1 294.4,521.3 294.8,520.5 295.1,519.6 295.3,518.8 295.3,518.0 295.2,517.1 295.0,516.3 294.7,515.5 294.3,514.7 293.7,513.9 293.0,513.2 292.3,512.5 291.4,511.9 290.5,511.3 289.4,510.7 288.3,510.2 287.1,509.8 285.8,509.5 284.5,509.2 283.2,509.0 281.8,508.8 280.4,508.7 279.0,508.7 277.6,508.8 276.2,508.9 274.9,509.1 273.5,509.4 272.2,509.8 271.0,510.2 269.8,510.7 268.7,511.2 267.7,511.8 266.7,512.4 265.9,513.1 265.1,513.8 264.5,514.6 263.9,515.4 263.5,516.2 263.2,517.0 263.0,517.8 262.9,518.7 263.0,519.5 263.2,520.4 263.5,521.2 263.9,522.0 264.4,522.7 265.1,523.5 265.9,524.2 266.7,524.8 267.7,525.4 268.7,526.0 269.9,526.5 271.1,526.9 272.3,527.3 273.6,527.6 275.0,527.8 276.4,528.0 277.8,528.0 279.2,528.0 280.6,528.0 282.0,527.8 283.4,527.6 284.8,527.3 286.1,527.0 287.3,526.5 288.5,526.1 289.7,525.5 290.7,524.9 291.6,524.3 292.5,523.6 293.2,522.8"/><polygon points="388.2,395.8 388.6,395.1 388.9,394.4 389.2,393.7 389.3,393.0 389.2,392.3 389.1,391.6 388.9,390.9 388.6,390.3 388.1,389.6 387.6,389.0 386.9,388.4 386.2,387.8 385.3,387.3 384.4,386.8 383.4,386.3 382.4,385.9 381.3,385.6 380.1,385.3 378.9,385.0 377.7,384.9 376.4,384.7 375.1,384.7 373.9,384.7 372.6,384.7 371.3,384.8 370.1,385.0 368.9,385.2 367.7,385.5 366.6,385.9 365.6,386.3 364.6,386.7 363.7,387.2 362.9,387.7 362.1,388.3 361.5,388.9 361.0,389.5 360.5,390.2 360.2,390.8 359.9,391.5 359.8,392.2 359.8,392.9 359.9,393.6 360.2,394.3 360.5,395.0 360.9,395.6 361.5,396.3 362.1,396.9 362.8,397.5 363.7,398.0 364.6,398.5 365.6,399.0 366.6,399.4 367.7,399.7 368.9,400.1 370.1,400.3 371.4,400.5 372.6,400.6 373.9,400.7 375.2,400.7 376.5,400.6 377.8,400.5 379.0,400.3 380.2,400.1 381.4,399.8 382.5,399.5 383.6,399.1 384.6,398.6 385.5,398.1 386.3,397.6 387.0,397.0 387.7,396.4"/><polygon points="467.0,290.2 467.3,289.7 467.6,289.1 467.7,288.5 467.8,287.9 467.8,287.4 467.6,286.8 467.3,286.2 467.0,285.6 466.5,285.1 466.0,284.5 465.4,284.0 464.7,283.5 463.9,283.1 463.0,282.7 462.1,282.3 461.1,282.0 460.1,281.7 459.0,281.4 457.9,281.2 456.7,281.1 455.5,280.9 454.4,280.9 453.2,280.9 452.0,280.9 450.9,281.0 449.8,281.2 448.7,281.4 447.6,281.6 446.6,281.9 445.7,282.2 444.8,282.6 444.0,283.0 443.3,283.5 442.6,283.9 442.1,284.4 441.6,285.0 441.3,285.5 441.0,286.1 440.8,286.7 440.8,287.3 440.8,287.8 440.9,288.4 441.2,289.0 441.5,289.6 441.9,290.1 442.5,290.7 443.1,291.2 443.8,291.7 444.6,292.1 445.5,292.6 446.4,292.9 447.4,293.3 448.4,293.6 449.5,293.9 450.7,294.1 451.8,294.2 453.0,294.3 454.2,294.4 455.4,294.4 456.5,294.3 457.7,294.2 458.8,294.1 459.9,293.9 461.0,293.6 462.0,293.4 462.9,293.0 463.8,292.6 464.6,292.2 465.3,291.8 466.0,291.3 466.5,290.8"/><polygon points="532.7,583.0 533.1,582.1 533.4,581.2 533.6,580.3 533.6,579.4 533.5,578.5 533.3,577.6 532.9,576.7 532.4,575.8 531.8,574.9 531.1,574.1 530.3,573.3 529.4,572.6 528.4,571.9 527.2,571.2 526.1,570.7 524.8,570.1 523.5,569.7 522.1,569.3 520.7,569.0 519.3,568.7 517.8,568.6 516.4,568.5 514.9,568.5 513.5,568.6 512.1,568.7 510.7,568.9 509.3,569.2 508.0,569.6 506.8,570.1 505.7,570.6 504.6,571.2 503.6,571.8 502.8,572.5 502.0,573.2 501.3,574.0 500.8,574.8 500.3,575.7 500.0,576.6 499.9,577.5 499.8,578.4 499.9,579.3 500.1,580.2 500.5,581.1 500.9,582.0 501.5,582.9 502.2,583.7 503.0,584.5 503.9,585.3 504.9,586.0 506.0,586.6 507.2,587.2 508.5,587.8 509.8,588.2 511.2,588.6 512.6,589.0 514.1,589.2 515.5,589.4 517.0,589.5 518.5,589.5 520.0,589.4 521.4,589.2 522.8,589.0 524.2,588.7 525.5,588.3 526.7,587.8 527.9,587.3 528.9,586.7 529.9,586.1 530.8,585.4 531.5,584.6 532.2,583.8"/><polygon points="608.4,446.2 608.7,445.5 608.9,444.7 609.0,444.0 609.0,443.2 608.9,442.5 608.6,441.7 608.2,441.0 607.8,440.3 607.2,439.6 606.5,438.9 605.7,438.2 604.9,437.6 603.9,437.0 602.9,436.5 601.8,436.0 600.6,435.6 599.4,435.2 598.1,434.9 596.8,434.6 595.5,434.4 594.2,434.3 592.9,434.2 591.6,434.2 590.2,434.3 589.0,434.4 587.7,434.6 586.5,434.8 585.4,435.2 584.3,435.5 583.3,435.9 582.3,436.4 581.5,436.9 580.7,437.5 580.0,438.1 579.5,438.8 579.0,439.4 578.7,440.2 578.4,440.9 578.3,441.6 578.3,442.4 578.5,443.1 578.7,443.9 579.0,444.6 579.5,445.4 580.1,446.1 580.7,446.8 581.5,447.4 582.4,448.0 583.3,448.6 584.4,449.2 585.5,449.7 586.6,450.1 587.9,450.5 589.1,450.8 590.4,451.1 591.8,451.3 593.1,451.4 594.4,451.5 595.8,451.5 597.1,451.4 598.4,451.3 599.7,451.1 600.9,450.9 602.1,450.5 603.1,450.2 604.2,449.7 605.1,449.2 606.0,448.7 606.7,448.1 607.4,447.5 607.9,446.9"/><polygon points="671.1,332.7 671.4,332.1 671.6,331.5 671.6,330.9 671.6,330.2 671.4,329.6 671.1,329.0 670.8,328.3 670.3,327.7 669.8,327.1 669.1,326.6 668.4,326.0 667.5,325.5 666.6,325.0 665.7,324.6 664.6,324.2 663.6,323.8 662.4,323.5 661.3,323.2 660.1,323.0 658.9,322.8 657.7,322.7 656.4,322.7 655.2,322.7 654.0,322.7 652.9,322.8 651.7,323.0 650.6,323.2 649.6,323.4 648.6,323.7 647.7,324.1 646.9,324.5 646.1,324.9 645.4,325.4 644.9,325.9 644.4,326.5 644.0,327.0 643.7,327.6 643.5,328.2 643.5,328.9 643.5,329.5 643.6,330.1 643.9,330.7 644.2,331.4 644.7,332.0 645.2,332.6 645.9,333.2 646.6,333.7 647.4,334.2 648.3,334.7 649.3,335.2 650.3,335.6 651.4,336.0 652.6,336.3 653.7,336.6 654.9,336.8 656.2,337.0 657.4,337.1 658.6,337.1 659.9,337.1 661.1,337.1 662.2,337.0 663.4,336.8 664.5,336.6 665.5,336.3 666.5,336.0 667.4,335.7 668.3,335.3 669.0,334.8 669.7,334.3 670.3,333.8 670.7,333.3"/></g>
<g stroke="#000" stroke-width="1" fill="none" stroke-dasharray="3 3"><line x1="16.8" y1="472.9" x2="538.1" y2="607.8"/></g>
<g stroke="#000" stroke-width="1" fill="none"><line x1="61.0" y1="427.0" x2="51.2" y2="437.0"/><line x1="105.2" y1="381.8" x2="94.3" y2="393.0"/><line x1="150.0" y1="336.0" x2="139.3" y2="347.0"/><line x1="195.0" y1="290.0" x2="182.8" y2="302.5"/><line x1="239.5" y1="244.5" x2="228.6" y2="255.7"/></g>
<g stroke-width="1" fill="none" shape-rendering="crispEdges">
<line x1="69.5" y1="702.5" x2="109.5" y2="711.5" stroke="#ff0000"/>
<line x1="69.5" y1="702.5" x2="86" y2="682" stroke="#00ee00"/>
<line x1="69.5" y1="702.5" x2="69.5" y2="667" stroke="#0000ff"/>
</g>
<g stroke="#000" stroke-width="1" fill="none" shape-rendering="crispEdges">
<polyline points="115.5,711.5 121,716.5"/><polyline points="121,711.5 115.5,716.5"/>
<polyline points="86.5,674.5 89.5,677 93,674.5"/><polyline points="89.5,677 87.5,679.5"/>
<polyline points="67,655.5 73.5,655.5 67.5,661.5 73.5,661.5"/>
</g>
</svg>
<div style="position:absolute;left:705px;top:0;width:356px;height:762px;background:#f0f0f0"></div>
<div style="position:absolute;left:709px;top:0px;width:352px;height:19px;box-sizing:border-box;background:#dadada;border-top:1px solid #b9b9b9;border-left:1px solid #b9b9b9;border-bottom:1px solid #b9b9b9;"></div>
<div class="t" style="left:714px;top:2.84px;font-size:12px;line-height:16px;">Customizer</div>
<svg style="position:absolute;left:1045px;top:5px" width="10" height="10"><path d="M1.5 1.5L8.6 8.6M8.6 1.5L1.5 8.6" stroke="#333" stroke-width="1.7"/></svg>
<div style="position:absolute;left:709px;top:30px;width:13px;height:13px;box-sizing:border-box;background:#fff;border:1px solid #333;"></div>
<svg style="position:absolute;left:709px;top:30px" width="13" height="13"><path d="M2.5 6.5L5 9L10.5 3.5" stroke="#333" stroke-width="1.2" fill="none"/></svg>
<div class="t" style="left:727px;top:29.33px;font-size:10.6px;line-height:16px;">Automatic Preview</div>
<div style="position:absolute;left:827px;top:26px;width:113px;height:20px;box-sizing:border-box;background:#e5e5e5;border:1px solid #adadad;"></div>
<div class="t" style="left:830px;top:29.36px;font-size:10.5px;line-height:16px;">Show Details</div>
<svg style="position:absolute;left:926px;top:33px" width="10" height="6"><path d="M0.5 0.5L5 5L9.5 0.5" stroke="#333" stroke-width="1" fill="none"/></svg>
<div style="position:absolute;left:945px;top:26px;width:112px;height:21px;box-sizing:border-box;background:#e1e1e1;border:1px solid #adadad;"></div>
<div class="t" style="left:945px;top:29.26px;font-size:10.8px;line-height:16px;width:112px;text-align:center;">Reset</div>
<div style="position:absolute;left:709px;top:52px;width:168px;height:26px;box-sizing:border-box;background:#fff;border:1px solid #7a7a7a;"></div>
<div class="t" style="left:714px;top:58.19px;font-size:11px;line-height:16px;">Voron 350 3x3</div>
<svg style="position:absolute;left:863px;top:62px" width="10" height="6"><path d="M0.5 0.5L5 5L9.5 0.5" stroke="#333" stroke-width="1" fill="none"/></svg>
<div style="position:absolute;left:886px;top:53px;width:38px;height:24px;box-sizing:border-box;background:#e1e1e1;border:1px solid #adadad;"></div>
<div class="t" style="left:886px;top:57.84px;font-size:12px;line-height:16px;width:38px;text-align:center;">+</div>
<div style="position:absolute;left:930px;top:53px;width:38px;height:24px;box-sizing:border-box;background:#e1e1e1;border:1px solid #adadad;"></div>
<div class="t" style="left:930px;top:57.84px;font-size:12px;line-height:16px;width:38px;text-align:center;">-</div>
<div style="position:absolute;left:974px;top:53px;width:83px;height:24px;box-sizing:border-box;background:#e1e1e1;border:1px solid #adadad;"></div>
<div class="t" style="left:974px;top:57.84px;font-size:14.9px;line-height:16px;width:83px;text-align:center;">save preset</div>
<div style="position:absolute;left:709px;top:82px;width:349px;height:700px;box-sizing:border-box;background:#f0f0f0;border:1px solid #858b94;"></div>
<div style="position:absolute;left:710px;top:83px;width:347px;height:21px;box-sizing:border-box;background:#c4def2;border:1px solid #99cbf5;"></div>
<svg style="position:absolute;left:716px;top:90px" width="15" height="9"><path d="M1 1H14L7.5 8Z" fill="#000"/></svg>
<div class="t" style="left:735px;top:88.22px;font-size:10.9px;line-height:16px;">Hardware Settings:</div>
<div class="t" style="left:714px;top:103.91px;font-size:11.8px;line-height:16px;font-weight:bold;">bed length x</div>
<div class="t" style="left:714px;top:117.26px;font-size:10.8px;line-height:16px;">In mm</div>
<div style="position:absolute;left:1006px;top:109px;width:47px;height:18px;box-sizing:border-box;background:#fff;border:1px solid #7a7a7a;"></div>
<div class="t" style="left:1006px;top:111.19px;font-size:11px;line-height:16px;width:26px;text-align:right;">350</div>
<div style="position:absolute;left:1037px;top:111px;width:14px;height:14px;box-sizing:border-box;background:#e8e8e8;border:1px solid #d5d5d5;"></div>
<div style="position:absolute;left:1037px;top:118px;width:14px;height:1px;box-sizing:border-box;background:#d5d5d5;"></div>
<svg style="position:absolute;left:1040px;top:112px" width="8" height="12"><path d="M1 4H6.6L3.8 1Z M1 7H6.6L3.8 10Z" fill="#000"/></svg>
<div class="t" style="left:714px;top:129.91px;font-size:11.8px;line-height:16px;font-weight:bold;">bed length y</div>
<div class="t" style="left:714px;top:143.26px;font-size:10.8px;line-height:16px;">In mm</div>
<div style="position:absolute;left:1006px;top:135px;width:47px;height:18px;box-sizing:border-box;background:#fff;border:1px solid #7a7a7a;"></div>
<div class="t" style="left:1006px;top:137.19px;font-size:11px;line-height:16px;width:26px;text-align:right;">350</div>
<div style="position:absolute;left:1037px;top:137px;width:14px;height:14px;box-sizing:border-box;background:#e8e8e8;border:1px solid #d5d5d5;"></div>
<div style="position:absolute;left:1037px;top:144px;width:14px;height:1px;box-sizing:border-box;background:#d5d5d5;"></div>
<svg style="position:absolute;left:1040px;top:138px" width="8" height="12"><path d="M1 4H6.6L3.8 1Z M1 7H6.6L3.8 10Z" fill="#000"/></svg>
<div class="t" style="left:714px;top:155.91px;font-size:11.8px;line-height:16px;font-weight:bold;">first layer height</div>
<div class="t" style="left:714px;top:169.26px;font-size:10.8px;line-height:16px;">In mm</div>
<div style="position:absolute;left:996px;top:161px;width:57px;height:18px;box-sizing:border-box;background:#fff;border:1px solid #7a7a7a;"></div>
<div class="t" style="left:996px;top:163.19px;font-size:11px;line-height:16px;width:36px;text-align:right;">0.2</div>
<div style="position:absolute;left:1037px;top:163px;width:14px;height:14px;box-sizing:border-box;background:#e8e8e8;border:1px solid #d5d5d5;"></div>
<div style="position:absolute;left:1037px;top:170px;width:14px;height:1px;box-sizing:border-box;background:#d5d5d5;"></div>
<svg style="position:absolute;left:1040px;top:164px" width="8" height="12"><path d="M1 4H6.6L3.8 1Z M1 7H6.6L3.8 10Z" fill="#000"/></svg>
<div style="position:absolute;left:710px;top:183px;width:347px;height:21px;box-sizing:border-box;background:#c4def2;border:1px solid #99cbf5;"></div>
<svg style="position:absolute;left:716px;top:190px" width="15" height="9"><path d="M1 1H14L7.5 8Z" fill="#000"/></svg>
<div class="t" style="left:735px;top:188.22px;font-size:10.9px;line-height:16px;">Mesh Dimensions:</div>
<div class="t" style="left:714px;top:203.91px;font-size:11.8px;line-height:16px;font-weight:bold;">mesh min x</div>
<div class="t" style="left:714px;top:217.26px;font-size:10.8px;line-height:16px;">X of the 1st probed point</div>
<div style="position:absolute;left:1006px;top:209px;width:47px;height:18px;box-sizing:border-box;background:#fff;border:1px solid #7a7a7a;"></div>
<div class="t" style="left:1006px;top:211.19px;font-size:11px;line-height:16px;width:26px;text-align:right;">20</div>
<div style="position:absolute;left:1037px;top:211px;width:14px;height:14px;box-sizing:border-box;background:#e8e8e8;border:1px solid #d5d5d5;"></div>
<div style="position:absolute;left:1037px;top:218px;width:14px;height:1px;box-sizing:border-box;background:#d5d5d5;"></div>
<svg style="position:absolute;left:1040px;top:212px" width="8" height="12"><path d="M1 4H6.6L3.8 1Z M1 7H6.6L3.8 10Z" fill="#000"/></svg>
<div class="t" style="left:714px;top:229.91px;font-size:11.8px;line-height:16px;font-weight:bold;">mesh min y</div>
<div class="t" style="left:714px;top:243.26px;font-size:10.8px;line-height:16px;">Y of the 1st probed point</div>
<div style="position:absolute;left:1006px;top:235px;width:47px;height:18px;box-sizing:border-box;background:#fff;border:1px solid #7a7a7a;"></div>
<div class="t" style="left:1006px;top:237.19px;font-size:11px;line-height:16px;width:26px;text-align:right;">20</div>
<div style="position:absolute;left:1037px;top:237px;width:14px;height:14px;box-sizing:border-box;background:#e8e8e8;border:1px solid #d5d5d5;"></div>
<div style="position:absolute;left:1037px;top:244px;width:14px;height:1px;box-sizing:border-box;background:#d5d5d5;"></div>
<svg style="position:absolute;left:1040px;top:238px" width="8" height="12"><path d="M1 4H6.6L3.8 1Z M1 7H6.6L3.8 10Z" fill="#000"/></svg>
<div class="t" style="left:714px;top:255.91px;font-size:11.8px;line-height:16px;font-weight:bold;">mesh max x</div>
<div class="t" style="left:714px;top:269.26px;font-size:10.8px;line-height:16px;">X of the last probed point</div>
<div style="position:absolute;left:1006px;top:261px;width:47px;height:18px;box-sizing:border-box;background:#fff;border:1px solid #7a7a7a;"></div>
<div class="t" style="left:1006px;top:263.19px;font-size:11px;line-height:16px;width:26px;text-align:right;">330</div>
<div style="position:absolute;left:1037px;top:263px;width:14px;height:14px;box-sizing:border-box;background:#e8e8e8;border:1px solid #d5d5d5;"></div>
<div style="position:absolute;left:1037px;top:270px;width:14px;height:1px;box-sizing:border-box;background:#d5d5d5;"></div>
<svg style="position:absolute;left:1040px;top:264px" width="8" height="12"><path d="M1 4H6.6L3.8 1Z M1 7H6.6L3.8 10Z" fill="#000"/></svg>
<div class="t" style="left:714px;top:281.91px;font-size:11.8px;line-height:16px;font-weight:bold;">mesh max y</div>
<div class="t" style="left:714px;top:295.26px;font-size:10.8px;line-height:16px;">Y of the last probed point</div>
<div style="position:absolute;left:1006px;top:287px;width:47px;height:18px;box-sizing:border-box;background:#fff;border:1px solid #7a7a7a;"></div>
<div class="t" style="left:1006px;top:289.19px;font-size:11px;line-height:16px;width:26px;text-align:right;">330</div>
<div style="position:absolute;left:1037px;top:289px;width:14px;height:14px;box-sizing:border-box;background:#e8e8e8;border:1px solid #d5d5d5;"></div>
<div style="position:absolute;left:1037px;top:296px;width:14px;height:1px;box-sizing:border-box;background:#d5d5d5;"></div>
<svg style="position:absolute;left:1040px;top:290px" width="8" height="12"><path d="M1 4H6.6L3.8 1Z M1 7H6.6L3.8 10Z" fill="#000"/></svg>
<div style="position:absolute;left:710px;top:309px;width:347px;height:21px;box-sizing:border-box;background:#c4def2;border:1px solid #99cbf5;"></div>
<svg style="position:absolute;left:716px;top:316px" width="15" height="9"><path d="M1 1H14L7.5 8Z" fill="#000"/></svg>
<div class="t" style="left:735px;top:314.22px;font-size:10.9px;line-height:16px;">Probed Points:</div>
<div class="t" style="left:714px;top:329.91px;font-size:11.8px;line-height:16px;font-weight:bold;">probed points x</div>
<div class="t" style="left:714px;top:343.33px;font-size:10.6px;line-height:16px;">&quot;GRID_MAX_POINTS_X&quot; or &quot;probe_count_x&quot; value, based on</div>
<div class="t" style="left:714px;top:356.26px;font-size:10.8px;line-height:16px;">fw. Should be an odd number</div>
<div style="position:absolute;left:1006px;top:341px;width:47px;height:18px;box-sizing:border-box;background:#fff;border:1px solid #7a7a7a;"></div>
<div class="t" style="left:1006px;top:343.19px;font-size:11px;line-height:16px;width:26px;text-align:right;">3</div>
<div style="position:absolute;left:1037px;top:343px;width:14px;height:14px;box-sizing:border-box;background:#e8e8e8;border:1px solid #d5d5d5;"></div>
<div style="position:absolute;left:1037px;top:350px;width:14px;height:1px;box-sizing:border-box;background:#d5d5d5;"></div>
<svg style="position:absolute;left:1040px;top:344px" width="8" height="12"><path d="M1 4H6.6L3.8 1Z M1 7H6.6L3.8 10Z" fill="#000"/></svg>
<div class="t" style="left:714px;top:368.91px;font-size:11.8px;line-height:16px;font-weight:bold;">probed points y</div>
<div class="t" style="left:714px;top:382.33px;font-size:10.6px;line-height:16px;">&quot;GRID_MAX_POINTS_Y&quot; or &quot;probe_count_y&quot; value, based on</div>
<div class="t" style="left:714px;top:395.26px;font-size:10.8px;line-height:16px;">fw. Should be an odd number</div>
<div style="position:absolute;left:1006px;top:380px;width:47px;height:18px;box-sizing:border-box;background:#fff;border:1px solid #7a7a7a;"></div>
<div class="t" style="left:1006px;top:382.19px;font-size:11px;line-height:16px;width:26px;text-align:right;">3</div>
<div style="position:absolute;left:1037px;top:382px;width:14px;height:14px;box-sizing:border-box;background:#e8e8e8;border:1px solid #d5d5d5;"></div>
<div style="position:absolute;left:1037px;top:389px;width:14px;height:1px;box-sizing:border-box;background:#d5d5d5;"></div>
<svg style="position:absolute;left:1040px;top:383px" width="8" height="12"><path d="M1 4H6.6L3.8 1Z M1 7H6.6L3.8 10Z" fill="#000"/></svg>
<div class="t" style="left:714px;top:407.91px;font-size:11.8px;line-height:16px;font-weight:bold;">probed points diameter</div>
<div class="t" style="left:714px;top:421.26px;font-size:10.8px;line-height:16px;">In mm</div>
<div style="position:absolute;left:1006px;top:413px;width:47px;height:18px;box-sizing:border-box;background:#fff;border:1px solid #7a7a7a;"></div>
<div class="t" style="left:1006px;top:415.19px;font-size:11px;line-height:16px;width:26px;text-align:right;">20</div>
<div style="position:absolute;left:1037px;top:415px;width:14px;height:14px;box-sizing:border-box;background:#e8e8e8;border:1px solid #d5d5d5;"></div>
<div style="position:absolute;left:1037px;top:422px;width:14px;height:1px;box-sizing:border-box;background:#d5d5d5;"></div>
<svg style="position:absolute;left:1040px;top:416px" width="8" height="12"><path d="M1 4H6.6L3.8 1Z M1 7H6.6L3.8 10Z" fill="#000"/></svg>
<div class="t" style="left:714px;top:433.91px;font-size:11.8px;line-height:16px;font-weight:bold;">probed connections</div>
<div class="t" style="left:714px;top:447.26px;font-size:10.8px;line-height:16px;">Draw lines connecting the probed points</div>
<div style="position:absolute;left:1036px;top:441px;width:13px;height:13px;box-sizing:border-box;background:#fff;border:1px solid #333;"></div>
<svg style="position:absolute;left:1036px;top:441px" width="13" height="13"><path d="M2.5 6.5L5 9L10.5 3.5" stroke="#333" stroke-width="1.2" fill="none"/></svg>
<div class="t" style="left:714px;top:459.91px;font-size:11.8px;line-height:16px;font-weight:bold;">probed connections thickness</div>
<div class="t" style="left:714px;top:473.26px;font-size:10.8px;line-height:16px;">In mm</div>
<div style="position:absolute;left:996px;top:465px;width:57px;height:18px;box-sizing:border-box;background:#fff;border:1px solid #7a7a7a;"></div>
<div class="t" style="left:996px;top:467.19px;font-size:11px;line-height:16px;width:36px;text-align:right;">3.0</div>
<div style="position:absolute;left:1037px;top:467px;width:14px;height:14px;box-sizing:border-box;background:#e8e8e8;border:1px solid #d5d5d5;"></div>
<div style="position:absolute;left:1037px;top:474px;width:14px;height:1px;box-sizing:border-box;background:#d5d5d5;"></div>
<svg style="position:absolute;left:1040px;top:468px" width="8" height="12"><path d="M1 4H6.6L3.8 1Z M1 7H6.6L3.8 10Z" fill="#000"/></svg>
<div style="position:absolute;left:710px;top:487px;width:347px;height:21px;box-sizing:border-box;background:#c4def2;border:1px solid #99cbf5;"></div>
<svg style="position:absolute;left:716px;top:494px" width="15" height="9"><path d="M1 1H14L7.5 8Z" fill="#000"/></svg>
<div class="t" style="left:735px;top:492.22px;font-size:10.9px;line-height:16px;">Interpolated Points:</div>
<div class="t" style="left:714px;top:507.91px;font-size:11.8px;line-height:16px;font-weight:bold;">interpolated points</div>
<div class="t" style="left:714px;top:521.26px;font-size:10.8px;line-height:16px;">Draw interpolated points</div>
<div style="position:absolute;left:1036px;top:515px;width:13px;height:13px;box-sizing:border-box;background:#fff;border:1px solid #333;"></div>
<svg style="position:absolute;left:1036px;top:515px" width="13" height="13"><path d="M2.5 6.5L5 9L10.5 3.5" stroke="#333" stroke-width="1.2" fill="none"/></svg>
<div class="t" style="left:714px;top:533.91px;font-size:11.8px;line-height:16px;font-weight:bold;">mesh pps x</div>
<div class="t" style="left:714px;top:547.26px;font-size:10.8px;line-height:16px;">First value of &quot;mesh_pps&quot; in Klipper</div>
<div style="position:absolute;left:1006px;top:539px;width:47px;height:18px;box-sizing:border-box;background:#fff;border:1px solid #7a7a7a;"></div>
<div class="t" style="left:1006px;top:541.19px;font-size:11px;line-height:16px;width:26px;text-align:right;">2</div>
<div style="position:absolute;left:1037px;top:541px;width:14px;height:14px;box-sizing:border-box;background:#e8e8e8;border:1px solid #d5d5d5;"></div>
<div style="position:absolute;left:1037px;top:548px;width:14px;height:1px;box-sizing:border-box;background:#d5d5d5;"></div>
<svg style="position:absolute;left:1040px;top:542px" width="8" height="12"><path d="M1 4H6.6L3.8 1Z M1 7H6.6L3.8 10Z" fill="#000"/></svg>
<div class="t" style="left:714px;top:559.91px;font-size:11.8px;line-height:16px;font-weight:bold;">mesh pps y</div>
<div class="t" style="left:714px;top:573.26px;font-size:10.8px;line-height:16px;">Second value of &quot;mesh_pps&quot; in Klipper</div>
<div style="position:absolute;left:1006px;top:565px;width:47px;height:18px;box-sizing:border-box;background:#fff;border:1px solid #7a7a7a;"></div>
<div class="t" style="left:1006px;top:567.19px;font-size:11px;line-height:16px;width:26px;text-align:right;">2</div>
<div style="position:absolute;left:1037px;top:567px;width:14px;height:14px;box-sizing:border-box;background:#e8e8e8;border:1px solid #d5d5d5;"></div>
<div style="position:absolute;left:1037px;top:574px;width:14px;height:1px;box-sizing:border-box;background:#d5d5d5;"></div>
<svg style="position:absolute;left:1040px;top:568px" width="8" height="12"><path d="M1 4H6.6L3.8 1Z M1 7H6.6L3.8 10Z" fill="#000"/></svg>
<div class="t" style="left:714px;top:585.91px;font-size:11.8px;line-height:16px;font-weight:bold;">interpolated points diameter</div>
<div class="t" style="left:714px;top:599.26px;font-size:10.8px;line-height:16px;">In mm</div>
<div style="position:absolute;left:1006px;top:591px;width:47px;height:18px;box-sizing:border-box;background:#fff;border:1px solid #7a7a7a;"></div>
<div class="t" style="left:1006px;top:593.19px;font-size:11px;line-height:16px;width:26px;text-align:right;">8</div>
<div style="position:absolute;left:1037px;top:593px;width:14px;height:14px;box-sizing:border-box;background:#e8e8e8;border:1px solid #d5d5d5;"></div>
<div style="position:absolute;left:1037px;top:600px;width:14px;height:1px;box-sizing:border-box;background:#d5d5d5;"></div>
<svg style="position:absolute;left:1040px;top:594px" width="8" height="12"><path d="M1 4H6.6L3.8 1Z M1 7H6.6L3.8 10Z" fill="#000"/></svg>
<div class="t" style="left:714px;top:611.91px;font-size:11.8px;line-height:16px;font-weight:bold;">interpolated connections</div>
<div class="t" style="left:714px;top:625.26px;font-size:10.8px;line-height:16px;">Draw lines connecting the interpolated points</div>
<div style="position:absolute;left:1036px;top:619px;width:13px;height:13px;box-sizing:border-box;background:#fff;border:1px solid #333;"></div>
<svg style="position:absolute;left:1036px;top:619px" width="13" height="13"><path d="M2.5 6.5L5 9L10.5 3.5" stroke="#333" stroke-width="1.2" fill="none"/></svg>
<div class="t" style="left:714px;top:637.91px;font-size:11.8px;line-height:16px;font-weight:bold;">interpolated connections thickness</div>
<div class="t" style="left:714px;top:651.26px;font-size:10.8px;line-height:16px;">In mm</div>
<div style="position:absolute;left:1006px;top:643px;width:47px;height:18px;box-sizing:border-box;background:#fff;border:1px solid #7a7a7a;"></div>
<div class="t" style="left:1006px;top:645.19px;font-size:11px;line-height:16px;width:26px;text-align:right;">2</div>
<div style="position:absolute;left:1037px;top:645px;width:14px;height:14px;box-sizing:border-box;background:#e8e8e8;border:1px solid #d5d5d5;"></div>
<div style="position:absolute;left:1037px;top:652px;width:14px;height:1px;box-sizing:border-box;background:#d5d5d5;"></div>
<svg style="position:absolute;left:1040px;top:646px" width="8" height="12"><path d="M1 4H6.6L3.8 1Z M1 7H6.6L3.8 10Z" fill="#000"/></svg>
<div style="position:absolute;left:710px;top:665px;width:347px;height:21px;box-sizing:border-box;background:#c4def2;border:1px solid #99cbf5;"></div>
<svg style="position:absolute;left:716px;top:672px" width="15" height="9"><path d="M1 1H14L7.5 8Z" fill="#000"/></svg>
<div class="t" style="left:735px;top:670.22px;font-size:10.9px;line-height:16px;">Skirt:</div>
<div class="t" style="left:714px;top:685.91px;font-size:11.8px;line-height:16px;font-weight:bold;">skirt</div>
<div class="t" style="left:714px;top:699.26px;font-size:10.8px;line-height:16px;">Skirt around your inner bed perimeter</div>
<div style="position:absolute;left:1036px;top:693px;width:13px;height:13px;box-sizing:border-box;background:#fff;border:1px solid #333;"></div>
<svg style="position:absolute;left:1036px;top:693px" width="13" height="13"><path d="M2.5 6.5L5 9L10.5 3.5" stroke="#333" stroke-width="1.2" fill="none"/></svg>
<div class="t" style="left:714px;top:711.91px;font-size:11.8px;line-height:16px;font-weight:bold;">skirt thickness</div>
<div class="t" style="left:714px;top:725.26px;font-size:10.8px;line-height:16px;">In mm</div>
<div style="position:absolute;left:1006px;top:717px;width:47px;height:18px;box-sizing:border-box;background:#fff;border:1px solid #7a7a7a;"></div>
<div class="t" style="left:1006px;top:719.19px;font-size:11px;line-height:16px;width:26px;text-align:right;">1</div>
<div style="position:absolute;left:1037px;top:719px;width:14px;height:14px;box-sizing:border-box;background:#e8e8e8;border:1px solid #d5d5d5;"></div>
<div style="position:absolute;left:1037px;top:726px;width:14px;height:1px;box-sizing:border-box;background:#d5d5d5;"></div>
<svg style="position:absolute;left:1040px;top:720px" width="8" height="12"><path d="M1 4H6.6L3.8 1Z M1 7H6.6L3.8 10Z" fill="#000"/></svg>
</div>
</body></html>
